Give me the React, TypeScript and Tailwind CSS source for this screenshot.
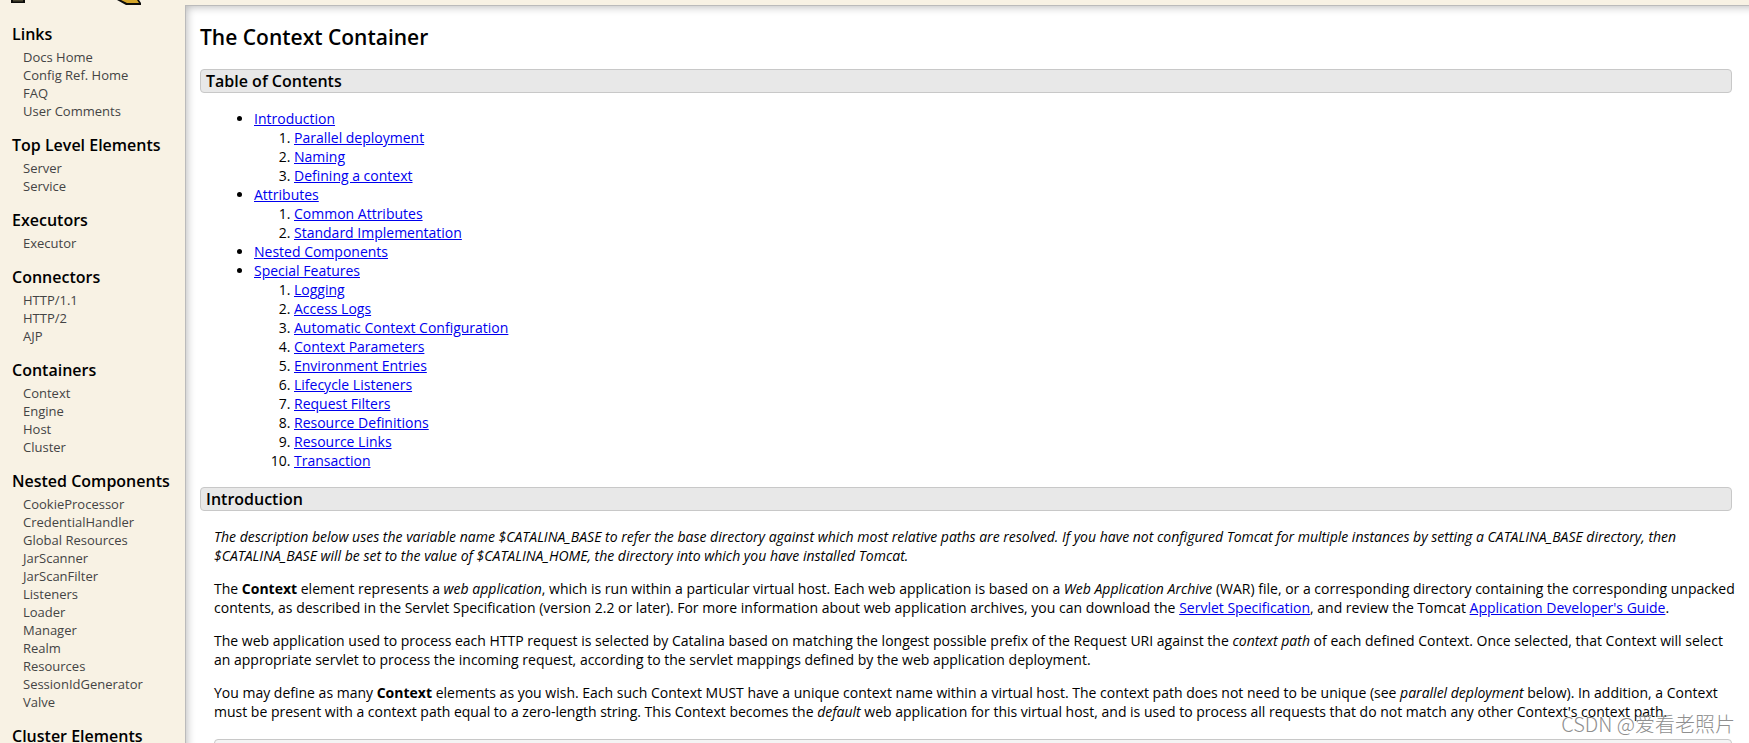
import type { ReactNode } from 'react';

const nav = [
  { title: 'Links', items: ['Docs Home', 'Config Ref. Home', 'FAQ', 'User Comments'] },
  { title: 'Top Level Elements', items: ['Server', 'Service'] },
  { title: 'Executors', items: ['Executor'] },
  { title: 'Connectors', items: ['HTTP/1.1', 'HTTP/2', 'AJP'] },
  { title: 'Containers', items: ['Context', 'Engine', 'Host', 'Cluster'] },
  {
    title: 'Nested Components',
    items: ['CookieProcessor', 'CredentialHandler', 'Global Resources', 'JarScanner', 'JarScanFilter', 'Listeners', 'Loader', 'Manager', 'Realm', 'Resources', 'SessionIdGenerator', 'Valve'],
  },
  { title: 'Cluster Elements', items: [] },
];

const toc = [
  { title: 'Introduction', items: ['Parallel deployment', 'Naming', 'Defining a context'] },
  { title: 'Attributes', items: ['Common Attributes', 'Standard Implementation'] },
  { title: 'Nested Components', items: [] },
  {
    title: 'Special Features',
    items: ['Logging', 'Access Logs', 'Automatic Context Configuration', 'Context Parameters', 'Environment Entries', 'Lifecycle Listeners', 'Request Filters', 'Resource Definitions', 'Resource Links', 'Transaction'],
  },
];

const toHref = (s: string) => '#' + s.replace(/\s+/g, '_');

function DocLink({ children }: { children: string }) {
  return <a href={toHref(children)} className="text-[#0000ee] underline">{children}</a>;
}

function SectionTitle({ children }: { children: ReactNode }) {
  return <h3 className="h-6 rounded border border-[#c8c8c8] bg-[#e8e8e8] px-[5px] text-base leading-[22px] font-semibold">{children}</h3>;
}

export default function App() {
  return (
    <div className="relative flex h-screen flex-col overflow-hidden bg-[#f8f2e4] font-['Open_Sans',sans-serif] text-sm leading-[19px] text-black">
      {/* bottom edge of the logo */}
      <header className="h-[5px] shrink-0">
        <svg width="185" height="6" viewBox="0 0 185 6" className="overflow-visible" aria-hidden="true">
          <path d="M11 0h14v3H11z" fill="#0d0d0b" />
          <path d="M13 0h10v1.5H13z" fill="#4a4632" />
          <path d="M117 0h22l2 3v2h-15z" fill="#0d0d0b" />
          <path d="M121 0h16l2 3h-12z" fill="#d5a62a" />
        </svg>
      </header>

      <div className="flex min-h-0 flex-1">
        <nav className="w-[185px] shrink-0 px-3 pt-[18px]">
          {nav.map((group) => (
            <div key={group.title} className="mb-[14px]">
              <h2 className="text-base leading-[22px] font-semibold whitespace-nowrap">{group.title}</h2>
              <ul className="mt-[3px] pl-[11px] text-[13px] leading-[18px]">
                {group.items.map((item) => (
                  <li key={item}><a href={toHref(item)} className="text-[#444]">{item}</a></li>
                ))}
              </ul>
            </div>
          ))}
        </nav>

        <main className="min-w-0 flex-1 border-t border-l border-[#bbb] bg-white pt-[18px] pr-[17px] pl-[14px] shadow-[inset_5px_5px_8px_-4px_#bbb]">
          <h1 className="text-[21px] leading-[27px] font-semibold">The Context Container</h1>

          <div className="mt-[18px]">
            <SectionTitle>Table of Contents</SectionTitle>
            <ul className="mt-4 ml-[14px] list-disc pl-10">
              {toc.map((entry) => (
                <li key={entry.title}>
                  <DocLink>{entry.title}</DocLink>
                  {entry.items.length > 0 && (
                    <ol className="list-decimal pl-10">
                      {entry.items.map((item) => <li key={item}><DocLink>{item}</DocLink></li>)}
                    </ol>
                  )}
                </li>
              ))}
            </ul>
          </div>

          <div className="mt-[17px]">
            <SectionTitle>Introduction</SectionTitle>
            <div className="-mr-1 mt-4 ml-[14px] space-y-[14px]">
              <p>
                <em>The description below uses the variable name $CATALINA_BASE to refer the base directory against which most relative paths are resolved. If you have not configured Tomcat for multiple instances by setting a CATALINA_BASE directory, then $CATALINA_BASE will be set to the value of $CATALINA_HOME, the directory into which you have installed Tomcat.</em>
              </p>
              <p>
                The <strong>Context</strong> element represents a <em>web application</em>, which is run within a particular virtual host. Each web application is based on a <em>Web Application Archive</em> (WAR) file, or a corresponding directory containing the corresponding unpacked contents, as described in the Servlet Specification (version 2.2 or later). For more information about web application archives, you can download the <DocLink>Servlet Specification</DocLink>, and review the Tomcat <DocLink>Application Developer's Guide</DocLink>.
              </p>
              <p>
                The web application used to process each HTTP request is selected by Catalina based on matching the longest possible prefix of the Request URI against the <em>context path</em> of each defined Context. Once selected, that Context will select an appropriate servlet to process the incoming request, according to the servlet mappings defined by the web application deployment.
              </p>
              <p>
                You may define as many <strong>Context</strong> elements as you wish. Each such Context MUST have a unique context name within a virtual host. The context path does not need to be unique (see <em>parallel deployment</em> below). In addition, a Context must be present with a context path equal to a zero-length string. This Context becomes the <em>default</em> web application for this virtual host, and is used to process all requests that do not match any other Context's context path.
              </p>
            </div>
            <div className="mt-[18px] ml-[14px] h-6 rounded border border-[#c8c8c8] bg-[#f4f4f4]" />
          </div>
        </main>
      </div>

      <span className="absolute right-[14px] bottom-[3px] font-['Noto_Sans_CJK_SC',sans-serif] text-[20px] leading-8 font-light text-[#8f8f8f]">CSDN @爱看老照片</span>
    </div>
  );
}
